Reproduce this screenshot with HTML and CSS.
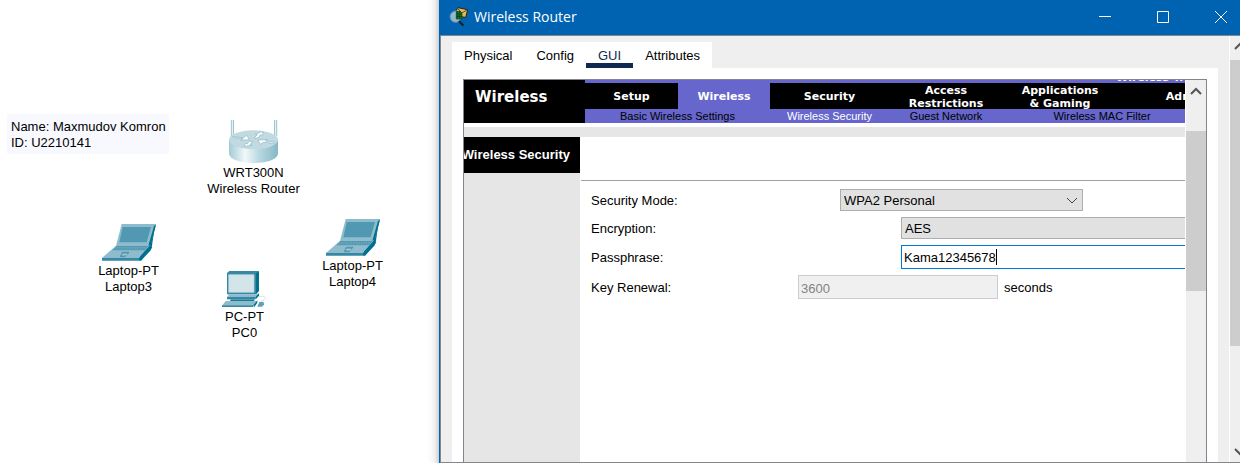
FILE: index.html
```html
<!DOCTYPE html>
<html lang="en">
<head>
<meta charset="utf-8">
<title>Wireless Router</title>
<link rel="stylesheet" href="styles.css">
</head>
<body>
<svg class="defs" aria-hidden="true">
  <symbol id="laptop" viewBox="60 54 168 117">
    <path d="M225 58L221 66L213 122L180 167L176 154L203 122L218 58Z" fill="#00708f"/>
    <path d="M122 57H225L208 123H105Z" fill="#8fbccd"/>
    <path d="M225 59L209 122H202L219 63Z" fill="#00708f"/>
    <path d="M125 66H210L197 112H115Z" fill="#5198b2"/>
    <path d="M105 122H207L174 158H64Z" fill="#8fbccd"/>
    <path d="M107 123H203L192 136H94Z" fill="#4f96b0"/>
    <path d="M103 127H200M98 132H196" stroke="#8fbccd" stroke-width="2" stroke-dasharray="3 2"/>
    <path d="M124 142H144L132 155H118Z" fill="#6da9be" stroke="#39849f" stroke-width="2"/>
    <path d="M124 149H138" stroke="#d3e6ec" stroke-width="2"/>
    <path d="M63 158H174V167H63Z" fill="#3587a3"/>
    <path d="M174 158L208 121L214 126L208 137L180 167H174Z" fill="#00708f"/>
  </symbol>
  <symbol id="desktop" viewBox="429 195 135 114">
    <path d="M444 204L451 198H540L530 206Z" fill="#39889f"/>
    <path d="M530 205L540 198V258L530 269Z" fill="#00708f"/>
    <path d="M444 204H531V268H444Z" fill="#3587a3"/>
    <path d="M449 209H525V262H449Z" fill="#d4e5ea" stroke="#b7d2dc" stroke-width="2"/>
    <path d="M451 268H539L530 276H444Z" fill="#8fbccd"/>
    <path d="M444 276H530V283H444Z" fill="#3587a3"/>
    <path d="M530 275L540 264V272L530 283Z" fill="#00708f"/>
    <path d="M454 283H526V290H454Z" fill="#167d9a"/>
    <path d="M440 288H534L523 302H429Z" fill="#8fbccd"/>
    <path d="M429 301H523V306H429Z" fill="#3587a3"/>
    <path d="M523 301L535 286V293L526 306Z" fill="#00708f"/>
    <path d="M540 275Q560 271 559 280Q557 285 547 288V292" fill="none" stroke="#c3d8df" stroke-width="2"/>
    <path d="M541 291H554L549 305H535Z" fill="#5f9fb7"/>
    <path d="M554 292V299L549 305Z" fill="#00708f"/>
  </symbol>
  <linearGradient id="metal">
    <stop offset="0" stop-color="#a2cbd5"/><stop offset=".33" stop-color="#f1f8fa"/>
    <stop offset=".62" stop-color="#b7d8e0"/><stop offset="1" stop-color="#86b8c5"/>
  </linearGradient>
</svg>
<main class="desktop">
  <section class="workspace" aria-label="Network topology">
    <p class="note">Name: Maxmudov Komron<br>ID: U2210141</p>
    <figure class="node router">
      <svg width="51" height="44" viewBox="684 60 153 132" aria-hidden="true">
        <path d="M694 60V108M700 60V108M824 60V108M830 60V108" stroke="#8ebbc8" stroke-width="3"/>
        <path d="M697 60V108M827 60V108" stroke="#e3f0f4" stroke-width="3"/>
        <path d="M687 119V162C693 198 828 198 834 162V119Z" fill="url(#metal)"/>
        <ellipse cx="760.500" cy="119" rx="73.500" ry="28.500" fill="#c1dae2"/>
        <path d="M698 110L731 113L740 106L748 119L722 121L730 116L702 113Z" fill="#fff" stroke="#8db7c4" stroke-width="2"/>
        <path d="M762 114L772 104L766 103L782 96L790 97L786 107L781 104L774 114Z" fill="#fff" stroke="#8db7c4" stroke-width="2"/>
        <path d="M824 126L796 123L803 119L774 120L781 133L790 127L822 130Z" fill="#fff" stroke="#8db7c4" stroke-width="2"/>
        <path d="M758 124L750 134L756 136L733 139L736 129L742 132L747 124Z" fill="#fff" stroke="#8db7c4" stroke-width="2"/>
      </svg>
      <figcaption>WRT300N<br>Wireless Router</figcaption>
    </figure>
    <figure class="node laptop3">
      <svg width="56" height="39" aria-hidden="true"><use href="#laptop"/></svg>
      <figcaption>Laptop-PT<br>Laptop3</figcaption>
    </figure>
    <figure class="node laptop4">
      <svg width="56" height="39" aria-hidden="true"><use href="#laptop"/></svg>
      <figcaption>Laptop-PT<br>Laptop4</figcaption>
    </figure>
    <figure class="node pc0">
      <svg width="45" height="38" aria-hidden="true"><use href="#desktop"/></svg>
      <figcaption>PC-PT<br>PC0</figcaption>
    </figure>
  </section>

  <section class="window">
    <header class="titlebar">
      <svg width="20" height="20" viewBox="0 0 60 60" aria-hidden="true">
        <path d="M22 10L27 2L56 8L50 31L34 29Z" fill="#e8b95a" stroke="#2a2618" stroke-width="3"/>
        <path d="M26 4L38 18L54 9" fill="none" stroke="#614a1b" stroke-width="3"/>
        <circle cx="20" cy="29" r="17" fill="#8fb9cf" stroke="#5a8dab" stroke-width="3"/>
        <path d="M22 14L34 13L39 20V36H22Z" fill="#16842c" stroke="#06380f" stroke-width="2"/>
        <path d="M26 15V35M32 14V35M22 21H39M22 28H39" stroke="#062f0b" stroke-width="2"/>
        <path d="M30 42L43 56" stroke="#171d26" stroke-width="6"/>
      </svg>
      <h1>Wireless Router</h1>
      <div class="controls">
        <button aria-label="Minimize"><svg width="12" height="12"><path d="M0 5.500H12"/></svg></button>
        <button aria-label="Maximize"><svg width="12" height="12"><path d="M.5.500H11.500V11.500H.5Z"/></svg></button>
        <button aria-label="Close"><svg width="12" height="12"><path d="M0 0L12 12M12 0L0 12"/></svg></button>
      </div>
    </header>
    <div class="window-body">
      <div class="content">
        <nav class="tabs" aria-label="Device views">
          <button>Physical</button><button>Config</button><button class="active">GUI</button><button>Attributes</button>
        </nav>
        <div class="panel">
          <div class="frame">
            <div class="viewport">
              <div class="masthead">
                <h2>Wireless</h2>
                <div class="menus">
                  <span class="model">Wireless Tri-Band Home Router</span>
                  <nav class="menu">
                    <a href="#">Setup</a><a href="#" class="current">Wireless</a><a href="#" class="mid">Security</a><a href="#" class="wide">Access<br>Restrictions</a><a href="#" class="wide">Applications<br>&amp; Gaming</a><a href="#" class="last">Administration</a>
                  </nav>
                  <nav class="submenu">
                    <a href="#" class="basic">Basic Wireless Settings</a><a href="#" class="mid current">Wireless Security</a><a href="#" class="wide">Guest Network</a><a href="#" class="last">Wireless MAC Filter</a>
                  </nav>
                </div>
              </div>
              <div class="band"></div>
              <div class="page">
                <aside><h3>Wireless Security</h3></aside>
                <form>
                  <div class="row">
                    <label for="mode">Security Mode:</label>
                    <span class="select mode"><select id="mode"><option>WPA2 Personal</option></select><svg width="10" height="6" aria-hidden="true"><path d="M0 0L5 5L10 0"/></svg></span>
                  </div>
                  <div class="row">
                    <label for="enc">Encryption:</label>
                    <span class="select long"><select id="enc"><option>AES</option></select></span>
                  </div>
                  <div class="row tall">
                    <label for="pass">Passphrase:</label>
                    <span class="pass long"><input id="pass" type="text" value="Kama12345678"><i class="caret"></i></span>
                  </div>
                  <div class="row tall">
                    <label for="renew">Key Renewal:</label>
                    <input id="renew" type="text" value="3600" disabled>
                    <span class="unit">seconds</span>
                  </div>
                </form>
              </div>
            </div>
            <div class="scrollbar inner"><svg width="20" height="20"><path d="M5 14L10 9L15 14"/></svg><div class="thumb"></div></div>
          </div>
        </div>
      </div>
      <div class="scrollbar outer"><svg width="20" height="20"><path d="M5 13L10 8L15 13"/></svg><div class="thumb"></div><svg class="down" width="20" height="20"><path d="M5 7L10 12L15 7"/></svg></div>
    </div>
  </section>
</main>
</body>
</html>
```
FILE: styles.css
```css
* { box-sizing: border-box; }
body {
  margin: 0;
  font: 13px/16px "Liberation Sans", Arial, sans-serif;
  color: #000;
  background: #fff;
}
h1, h2, h3, p, figure { margin: 0; }
button, input, select { font: inherit; color: inherit; border-radius: 0; margin: 0; }
button { border: 0; background: none; padding: 0; }
a { color: inherit; text-decoration: none; }
svg { display: block; flex: none; }
.defs { position: absolute; width: 0; height: 0; }

.desktop { display: flex; height: 100vh; overflow: hidden; }
.workspace {
  position: relative;
  flex: 0 0 439px;
  background: linear-gradient(to left, #cfcfcf, #efefef 4px, #fafafa 8px, #fff 12px);
}
.note { position: absolute; left: 7px; top: 114px; padding: 5px 3px 3px 4px; background: #f8f8ff; white-space: nowrap; }
.node {
  position: absolute;
  width: 101px;
  display: flex;
  flex-direction: column;
  align-items: center;
  gap: 1px;
  text-align: center;
}
.router { left: 203px; top: 120px; }
.laptop3 { left: 78px; top: 223px; }
.laptop4 { left: 302px; top: 218px; }
.pc0 { left: 194px; top: 270px; }

.window {
  flex: 1;
  min-width: 0;
  display: flex;
  flex-direction: column;
  border-left: 1px solid #0063b1;
  background: #efefef;
}
.titlebar {
  display: flex;
  align-items: center;
  height: 35px;
  padding: 0 0 2px 9px;
  gap: 5px;
  background: #0063b1;
  color: #fff;
}
.titlebar h1 { flex: 1; font: 14px/20px "Open Sans", "Noto Sans", sans-serif; }
.controls { display: flex; gap: 20px; }
.controls button { width: 38px; height: 32px; display: grid; place-items: center; }
.controls path { fill: none; stroke: #fff; }

.window-body {
  flex: 1;
  min-height: 0;
  display: flex;
  border: 1px solid #82868f;
  border-right: 0;
}
.content {
  flex: 1;
  min-width: 0;
  display: flex;
  flex-direction: column;
  padding: 6px 11px 0;
}
.tabs { display: flex; align-self: flex-start; background: #fff; }
.tabs button { height: 26px; padding: 2px 12px 0; }
.tabs .active { color: #12294f; box-shadow: inset 0 -5px #12294f; }
.panel { flex: 1; min-height: 0; display: flex; padding: 11px 11px 0; background: #fff; }
.frame {
  flex: 1;
  min-width: 0;
  display: flex;
  border: 1px solid #82838f;
  border-bottom: 0;
}
.viewport { flex: 1; min-width: 0; display: flex; flex-direction: column; overflow: hidden; }

.masthead { display: flex; height: 43px; flex: none; }
.masthead h2 {
  flex: none;
  width: 121px;
  padding: 7px 11px;
  background: #000;
  color: #fff;
  font: bold 15px/20px "DejaVu Sans", Verdana, sans-serif;
}
.menus { position: relative; flex: 1; min-width: 0; padding-top: 3px; background: #66c; overflow: hidden; }
.model {
  position: absolute;
  left: 531px;
  top: -9px;
  color: #fff;
  font: bold 11px/14px "DejaVu Sans", Verdana, sans-serif;
  white-space: nowrap;
}
.menu, .submenu { display: flex; position: relative; text-align: center; white-space: nowrap; }
.menu { height: 26px; color: #fff; font: bold 11px/13px "DejaVu Sans", Verdana, sans-serif; }
.menu a {
  flex: 0 0 93px;
  height: 26px;
  display: flex;
  align-items: center;
  justify-content: center;
  padding-top: 1px;
  background: #000;
}
.menu .current { flex-basis: 92px; background: #66c; }
.submenu { height: 14px; font-size: 11px; line-height: 14px; }
.submenu a { flex: 0 0 auto; }
.submenu .current { color: #fff; }
.submenu .basic { flex-basis: 185px; }
.menu .mid, .submenu .mid { flex-basis: 119px; }
.menu .wide, .submenu .wide { flex-basis: 114px; }
.menu .last { flex-basis: 190px; }
.submenu .last { flex-basis: 198px; }

.band { flex: none; height: 10px; margin-top: 4px; background: #e6e6e6; }
.page { flex: 1; display: flex; min-height: 0; }
aside { flex: none; width: 116px; background: #e6e6e6; overflow: hidden; }
aside h3 {
  display: flex;
  justify-content: flex-end;
  padding: 10px;
  background: #000;
  color: #fff;
  font: bold 13px/16px "Liberation Sans", Arial, sans-serif;
  white-space: nowrap;
}
form {
  flex: 1;
  min-width: 0;
  margin: 43px 0 0 1px;
  padding: 8px 0 0 10px;
  border-top: 1px solid #a0a0a0;
  display: flex;
  flex-direction: column;
  gap: 6px;
}
.row { display: flex; align-items: center; height: 22px; }
.row.tall { height: 24px; }
label { flex: none; width: 207px; padding-top: 2px; }
.unit { padding-top: 2px; }
.select { position: relative; flex: none; display: flex; height: 22px; }
select {
  appearance: none;
  width: 100%;
  padding: 2px 3px 0;
  background: #e1e1e1;
  border: 1px solid #adadad;
}
.select svg { position: absolute; right: 6px; top: 9px; overflow: visible; }
.select path { fill: none; stroke: #444; }
.mode { width: 243px; margin-left: 42px; }
.long { width: 400px; margin-left: 103px; }
.pass { position: relative; flex: none; display: flex; height: 24px; }
input { padding: 2px 2px 0; outline: 0; }
.pass input { width: 100%; border: 1px solid #0078d7; }
.caret { position: absolute; left: 95px; top: 4px; width: 1px; height: 16px; background: #000; }
#renew {
  width: 200px;
  height: 24px;
  margin-right: 6px;
  border: 1px solid #ccc;
  background: #f0f0f0;
  color: #838383;
}

.scrollbar { flex: none; display: flex; flex-direction: column; overflow: hidden; background: #efefef; }
.scrollbar path { fill: none; stroke: #555; stroke-width: 2; }
.thumb { background: #cdcdcd; }
.inner { width: 21px; border-left: 1px solid #fff; }
.inner .thumb { height: 160px; margin-top: 31px; }
.outer { width: 11px; border-left: 1px solid #fff; }
.outer .thumb { height: 286px; margin-top: 4px; }
.outer .down { margin-top: auto; }
```
